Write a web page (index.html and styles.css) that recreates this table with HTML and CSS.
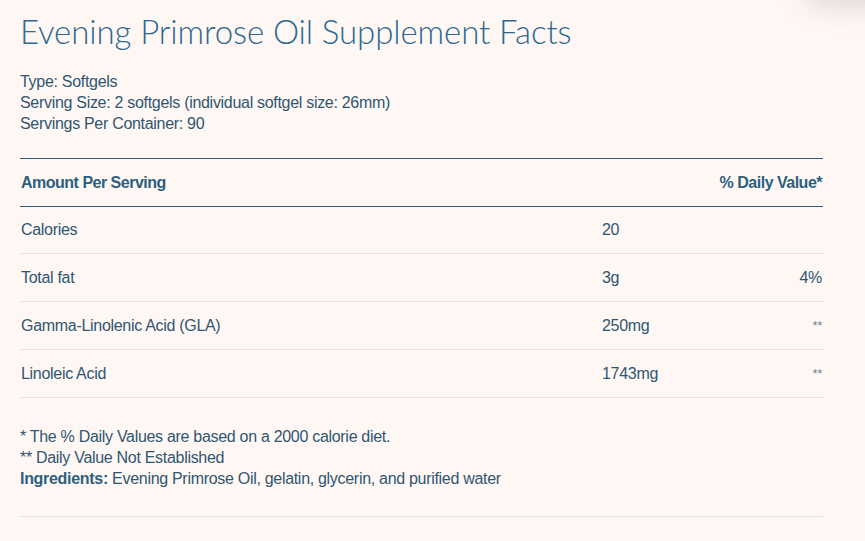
FILE: index.html
```html
<!DOCTYPE html>
<html>
<head>
<meta charset="utf-8">
<link rel="stylesheet" href="styles.css">
</head>
<body>
<div class="corner-shadow"></div>
<main class="facts">
  <h1 class="title">Evening Primrose Oil Supplement Facts</h1>
  <div class="meta">
    <p>Type: Softgels</p>
    <p>Serving Size: 2 softgels (individual softgel size: 26mm)</p>
    <p>Servings Per Container: 90</p>
  </div>
  <div class="table">
    <div class="row head">
      <span class="name">Amount Per Serving</span>
      <span class="amount"></span>
      <span class="dv">% Daily Value*</span>
    </div>
    <div class="row first">
      <span class="name">Calories</span>
      <span class="amount">20</span>
      <span class="dv"></span>
    </div>
    <div class="row">
      <span class="name">Total fat</span>
      <span class="amount">3g</span>
      <span class="dv">4%</span>
    </div>
    <div class="row">
      <span class="name">Gamma-Linolenic Acid (GLA)</span>
      <span class="amount">250mg</span>
      <span class="dv small">**</span>
    </div>
    <div class="row">
      <span class="name">Linoleic Acid</span>
      <span class="amount">1743mg</span>
      <span class="dv small">**</span>
    </div>
  </div>
  <div class="notes">
    <p>* The % Daily Values are based on a 2000 calorie diet.</p>
    <p>** Daily Value Not Established</p>
    <p><strong>Ingredients:</strong> Evening Primrose Oil, gelatin, glycerin, and purified water</p>
  </div>
  <div class="end-rule"></div>
</main>
</body>
</html>
```
FILE: styles.css
```css
html, body {
  margin: 0;
  padding: 0;
  background: #fff7f4;
}
body {
  font-family: "Liberation Sans", Arial, sans-serif;
  color: #2f5670;
  overflow: hidden;
  height: 541px;
  position: relative;
}
.corner-shadow {
  position: absolute;
  top: -70px;
  right: -40px;
  width: 100px;
  height: 70px;
  border-radius: 20px;
  box-shadow: 0 4px 30px rgba(60, 50, 50, 0.18);
  background: #fff7f4;
}
.facts {
  width: 803px;
  padding: 0 0 0 20px;
}
.title {
  margin: 0;
  padding-top: 11px;
  font-family: "Lato", sans-serif;
  font-weight: 300;
  font-size: 33px;
  line-height: 40px;
  color: #2d6890;
  letter-spacing: -0.1px;
}
.meta {
  margin-top: 20px;
  font-size: 16px;
  line-height: 21px;
  letter-spacing: -0.3px;
}
.meta p, .notes p {
  margin: 0;
}
.table {
  margin-top: 24px;
  border-top: 1px solid #2c5f80;
}
.row {
  display: grid;
  grid-template-columns: 582px 1fr auto;
  align-items: center;
  height: 47px;
  border-bottom: 1px solid #e8e2df;
  font-size: 16px;
  letter-spacing: -0.3px;
}
.row.first {
  height: 46px;
}
.row .name {
  padding-left: 1px;
}
.row.head {
  height: 47px;
  font-weight: bold;
  color: #2c5f80;
  border-bottom: 1px solid #2c5f80;
  letter-spacing: -0.5px;
  font-size: 16px;
}
.row .dv {
  text-align: right;
  padding-right: 1px;
}
.row .dv.small {
  font-size: 13px;
  color: #6f8595;
}
.notes {
  margin-top: 28px;
  font-size: 16px;
  line-height: 21px;
  letter-spacing: -0.3px;
}
.notes strong {
  color: #2c5f80;
}
.end-rule {
  margin-top: 27px;
  border-top: 1px solid #e8e2df;
}
```
